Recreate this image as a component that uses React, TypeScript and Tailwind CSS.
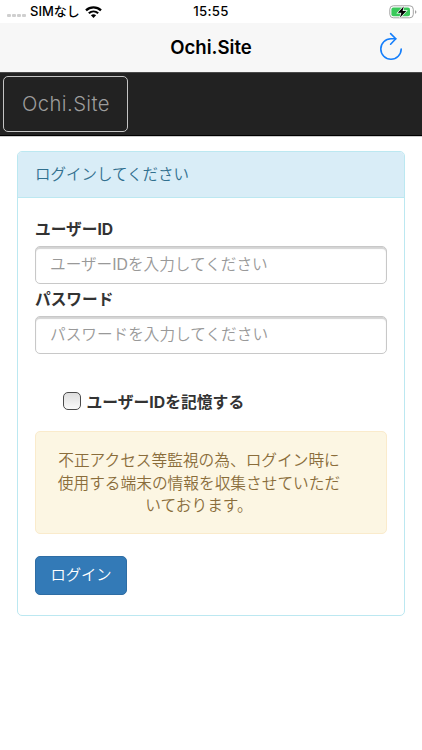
import React from "react";

function StatusBar() {
  return (
    <div className="grid h-[23px] grid-cols-3 items-center bg-white text-black">
      <div className="flex items-center pl-[7px]">
        <div className="mt-[8px] flex gap-[1.4px]">
          <span className="h-[3.6px] w-[3.6px] rounded-[1px] bg-[#cfcfcf]" />
          <span className="h-[3.6px] w-[3.6px] rounded-[1px] bg-[#cfcfcf]" />
          <span className="h-[3.6px] w-[3.6px] rounded-[1px] bg-[#cfcfcf]" />
          <span className="h-[3.6px] w-[3.6px] rounded-[1px] bg-[#cfcfcf]" />
        </div>
        <span className="ml-[4.5px] text-[13px] font-medium leading-[23px] whitespace-nowrap">SIMなし</span>
        <svg className="ml-[5.5px] h-[12px] w-[17px]" viewBox="0 0 17 12">
          <path d="M1 4.4C5.2.4 11.8.4 16 4.4" fill="none" stroke="#000" strokeWidth="2.3" />
          <path d="M3.8 7.3C6.5 4.9 10.5 4.9 13.2 7.3" fill="none" stroke="#000" strokeWidth="2.1" />
          <path d="M5.9 9.2C7.4 7.9 9.6 7.9 11.1 9.2L8.5 11.9Z" fill="#000" />
        </svg>
      </div>
      <div className="text-center text-[13.2px] font-medium tracking-[0.35px]">15:55</div>
      <div className="flex justify-end pr-[5px]">
        <svg className="h-[14px] w-[28px]" viewBox="0 0 28 14">
          <rect x="0.8" y="0.8" width="23.5" height="12" rx="3.5" fill="#fff" stroke="#a3a3a3" />
          <rect x="2.4" y="2.4" width="18.6" height="8.8" rx="2" fill="#3ac95b" />
          <path d="M26 5.2v3.6c.9-.4 1.4-1 1.4-1.8S26.9 5.6 26 5.2Z" fill="#a3a3a3" />
          <path d="M14.8 1.3 8.8 7.8h3.6l-1.5 5 6.4-6.8h-3.7Z" fill="#000" stroke="#fff" strokeWidth="1.3" paintOrder="stroke" />
        </svg>
      </div>
    </div>
  );
}

function TitleBar() {
  return (
    <div className="grid h-[49px] grid-cols-[1fr_auto_1fr] items-center bg-[#f7f7f7]">
      <span />
      <h1 className="pb-[1px] text-[18.6px] font-semibold leading-[24px] text-black">Ochi.Site</h1>
      <svg className="mr-[18px] mb-[2px] h-[30px] w-[26px] justify-self-end" viewBox="0 0 26 30" fill="none" stroke="#147efb" strokeWidth="1.6" strokeLinecap="round" strokeLinejoin="round">
        <path d="M23.2 17A10.2 10.2 0 1 1 13 6.8H17.8" />
        <path d="M12.6 1.6 17.8 6.8 12.6 12.2" />
      </svg>
    </div>
  );
}

function Field({ label, placeholder, type }: { label: string; placeholder: string; type: string }) {
  return (
    <label className="block">
      <span className="block h-[32px] pt-[5px] font-['Inter','Noto_Sans_CJK_JP',sans-serif] text-[15.7px] font-bold leading-[22px] text-[#333]">
        {label}
      </span>
      <input
        type={type}
        placeholder={placeholder}
        className="block h-[38px] w-full rounded-[5px] border border-[#c8c8c8] bg-white px-[14px] pb-0 text-[15.65px] font-[350] shadow-[inset_0_2px_1px_#d4d4d4] outline-none placeholder:text-[#999]"
      />
    </label>
  );
}

export default function App() {
  return (
    <div className="h-[750px] w-[422px] overflow-hidden bg-white font-['Inter','Noto_Sans_CJK_JP',sans-serif]">
      <StatusBar />
      <TitleBar />
      <nav className="flex h-[64px] border-t border-b border-t-[#4a4a4a] border-b-black bg-[#222] pt-[3px] pl-[3px] shadow-[0_1px_0_#ccc]">
        <a className="flex h-[56px] w-[125px] items-center rounded-[5px] border border-[#c4c4c4] pl-[18px] text-[20.3px] font-light tracking-[0.4px] text-[#9d9d9d]">
          Ochi.Site
        </a>
      </nav>
      <main className="mt-[15px] ml-[17px] h-[465px] w-[388px] rounded-[5px] border border-[#bce8f1] bg-white font-['Liberation_Sans','Noto_Sans_CJK_JP',sans-serif]">
        <h2 className="h-[46px] rounded-t-[4px] border-b border-[#bce8f1] bg-[#d9edf7] px-[17px] text-[15.5px] font-[350] leading-[45px] text-[#31708f]">
          ログインしてください
        </h2>
        <form className="px-[17px] pt-[16px]">
          <Field label="ユーザーID" placeholder="ユーザーIDを入力してください" type="text" />
          <Field label="パスワード" placeholder="パスワードを入力してください" type="password" />
          <label className="mt-[37px] ml-[27.5px] flex h-[20px] items-center font-['Inter','Noto_Sans_CJK_JP',sans-serif] text-[15.8px] font-bold text-[#333]">
            <input
              type="checkbox"
              className="mr-[6px] h-[18px] w-[18px] appearance-none rounded-[5px] border border-[#4b4b4b] bg-linear-to-b from-[#dedede] to-[#fafafa]"
            />
            <span className="pt-[4px]">ユーザーIDを記憶する</span>
          </label>
          <div className="mt-[20px] h-[103px] rounded-[5px] border border-[#faebcc] bg-[#fcf6e3] pt-[18px] pr-[45px] pl-[21px] text-center text-[15.7px] font-[350] leading-[22.5px] whitespace-nowrap text-[#8a6d3b]">
            <p>不正アクセス等監視の為、ログイン時に</p>
            <p>使用する端末の情報を収集させていただ</p>
            <p>いております。</p>
          </div>
          <button type="button" className="mt-[22px] block h-[39px] w-[92px] rounded-[5px] border border-[#2e6da4] bg-[#337ab7] text-[15.3px] font-[350] text-white">
            ログイン
          </button>
        </form>
      </main>
    </div>
  );
}
